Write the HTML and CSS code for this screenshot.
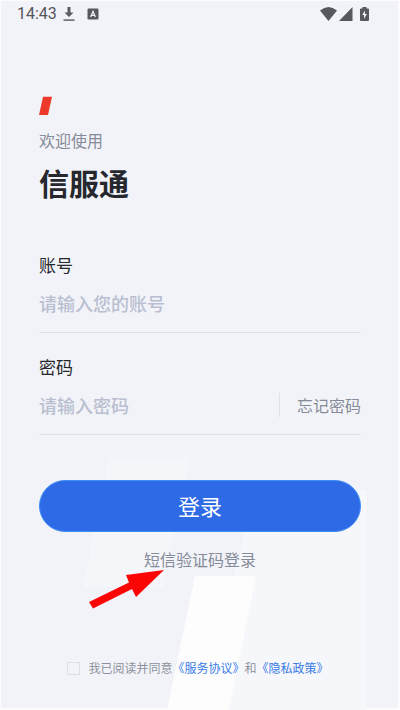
FILE: index.html
```html
<!DOCTYPE html>
<html lang="zh-CN">
<head>
<meta charset="utf-8">
<meta name="viewport" content="width=device-width, initial-scale=1">
<title>信服通</title>
<link rel="stylesheet" href="styles.css">
</head>
<body>
<div class="screen">
  <svg class="backdrop" viewBox="0 0 400 260" aria-hidden="true">
    <path d="M109 7H190L163 137H83Z" fill="#f5f6f9"/>
    <path d="M256 40H367V260H178L194 126H234Z" fill="#f6f7fa"/>
    <path d="M195 126H256L229 260H167Z" fill="#fdfdfe"/>
  </svg>
  <header class="status">
    <span class="time">14:43</span>
    <svg class="icon-download" width="12" height="16" viewBox="0 0 12 16" aria-hidden="true">
      <path d="M4.500 1h3v5.500h3L6 11 1.500 6.500h3z" fill="#5b5c60"/>
      <path d="M.5 13.200h11v1.800H.5z" fill="#77787c"/>
    </svg>
    <svg class="icon-letter" width="12" height="12" viewBox="0 0 12 12" aria-hidden="true">
      <rect x=".5" y=".5" width="11" height="11" rx="1.200" fill="#57585c"/>
      <path d="M3.600 9 6 3.200 8.400 9M4.500 7.300h3" fill="none" stroke="#f2f3f8" stroke-width="1.200"/>
    </svg>
    <svg class="icon-signal" width="50" height="16" viewBox="0 0 50 16" aria-hidden="true">
      <g fill="#57585c">
        <path d="M0 4.500Q8.500-2.500 17 4.500L8.500 15z"/>
        <path d="M32.500 1v14H19z"/>
        <path d="M42.500 1h4v1.500H48q1 0 1 1V14q0 1-1 1h-7q-1 0-1-1V3.500q0-1 1-1h1.500z"/>
      </g>
      <path d="M44.900 4.500 42.200 9h1.800v3.800l2.900-4.700H45z" fill="#f2f3f8"/>
    </svg>
  </header>
  <main class="content">
    <svg class="brand" width="14" height="20" viewBox="0 0 14 20" aria-hidden="true">
      <path d="M4 .8h9L9 19H0z" fill="#ed3929"/>
    </svg>
    <p class="welcome">欢迎使用</p>
    <h1 class="title">信服通</h1>
    <form class="form">
      <div class="field">
        <label class="label" for="account">账号</label>
        <div class="row">
          <input class="input" id="account" type="text" placeholder="请输入您的账号">
        </div>
      </div>
      <div class="field">
        <label class="label" for="password">密码</label>
        <div class="row">
          <input class="input" id="password" type="password" placeholder="请输入密码">
          <a class="forgot" href="#">忘记密码</a>
        </div>
      </div>
      <button class="submit" type="submit">登录</button>
      <div class="sms">
        <a class="sms-link" href="#">短信验证码登录</a>
        <svg class="arrow" width="78" height="42" viewBox="0 0 78 42" aria-hidden="true">
          <path d="M75 0 47 27l-4-8L4 38.500 0 32 40 12.500 37 5z" fill="#fb0505"/>
        </svg>
      </div>
      <div class="agree">
        <input class="check" id="agree" type="checkbox">
        <label for="agree">我已阅读并同意<a href="#">《服务协议》</a>和<a href="#">《隐私政策》</a></label>
      </div>
    </form>
  </main>
</div>
</body>
</html>
```
FILE: styles.css
```css
* {
  box-sizing: border-box;
}

body {
  margin: 0;
  background: #f2f3f8;
  font-family: "Noto Sans CJK SC", sans-serif;
  color: #26282d;
}

a {
  color: inherit;
  text-decoration: none;
}

.screen {
  position: relative;
  display: flex;
  flex-direction: column;
  min-height: 100vh;
  border: 1px solid #fcfcfe;
  border-width: 1px 2px 2px 1px;
}

.backdrop {
  position: absolute;
  left: -1px;
  bottom: -2px;
  width: calc(100% + 3px);
}

.status {
  display: flex;
  align-items: center;
  height: 25px;
  padding: 0 28px 0 16px;
}

.time {
  font: 16px/24px Roboto, sans-serif;
  color: #55565a;
}

.icon-download {
  margin-left: 6px;
}

.icon-letter {
  margin-left: 12px;
}

.icon-signal {
  margin-left: auto;
}

.content {
  position: relative;
  display: flex;
  flex: 1;
  flex-direction: column;
  padding: 70px 37px 0 38px;
}

.brand {
  display: block;
}

.welcome {
  margin: 12px 0 0;
  font-size: 16px;
  line-height: 24px;
  color: #868b99;
}

.title {
  margin: 8px 0 0;
  font-size: 30px;
  font-weight: 700;
  line-height: 44px;
}

.form {
  display: flex;
  flex: 1;
  flex-direction: column;
  margin-top: 48px;
}

.field {
  margin-bottom: 21px;
}

.label {
  display: block;
  font-size: 17px;
  line-height: 26px;
}

.row {
  display: flex;
  align-items: center;
  height: 55px;
  padding-bottom: 4px;
  border-bottom: 1px solid #dfe1e8;
}

.input {
  flex: 1;
  min-width: 0;
  padding: 0;
  border: 0;
  outline: 0;
  background: none;
  font: 500 18px/26px "Noto Sans CJK SC", sans-serif;
  color: #222428;
}

.input::placeholder {
  color: #b9bfd0;
}

.forgot {
  padding-left: 17px;
  border-left: 1px solid #dfe1e8;
  font-size: 16px;
  line-height: 24px;
  color: #868b99;
}

.submit {
  height: 52px;
  margin-top: 24px;
  padding: 0 0 2px;
  border: 1px solid #3f8ff5;
  border-radius: 26px;
  background: #2e6ae5;
  font: 22px/32px "Noto Sans CJK SC", sans-serif;
  color: #fff;
}

.sms {
  position: relative;
  margin-top: 15px;
  text-align: center;
  font-size: 16px;
  line-height: 24px;
  color: #868b99;
}

.arrow {
  position: absolute;
  top: 23px;
  left: 50px;
}

.agree {
  display: flex;
  align-items: center;
  justify-content: center;
  gap: 8px;
  margin-top: auto;
  padding: 0 4px 31px 0;
  font-size: 12px;
  line-height: 18px;
  color: #8d919d;
}

.agree a {
  color: #3a7be6;
}

.check {
  appearance: none;
  width: 13px;
  height: 13px;
  margin: 0;
  border: 1px solid #dddfe6;
}

.check:checked {
  background: #2e6ae5;
}
```
